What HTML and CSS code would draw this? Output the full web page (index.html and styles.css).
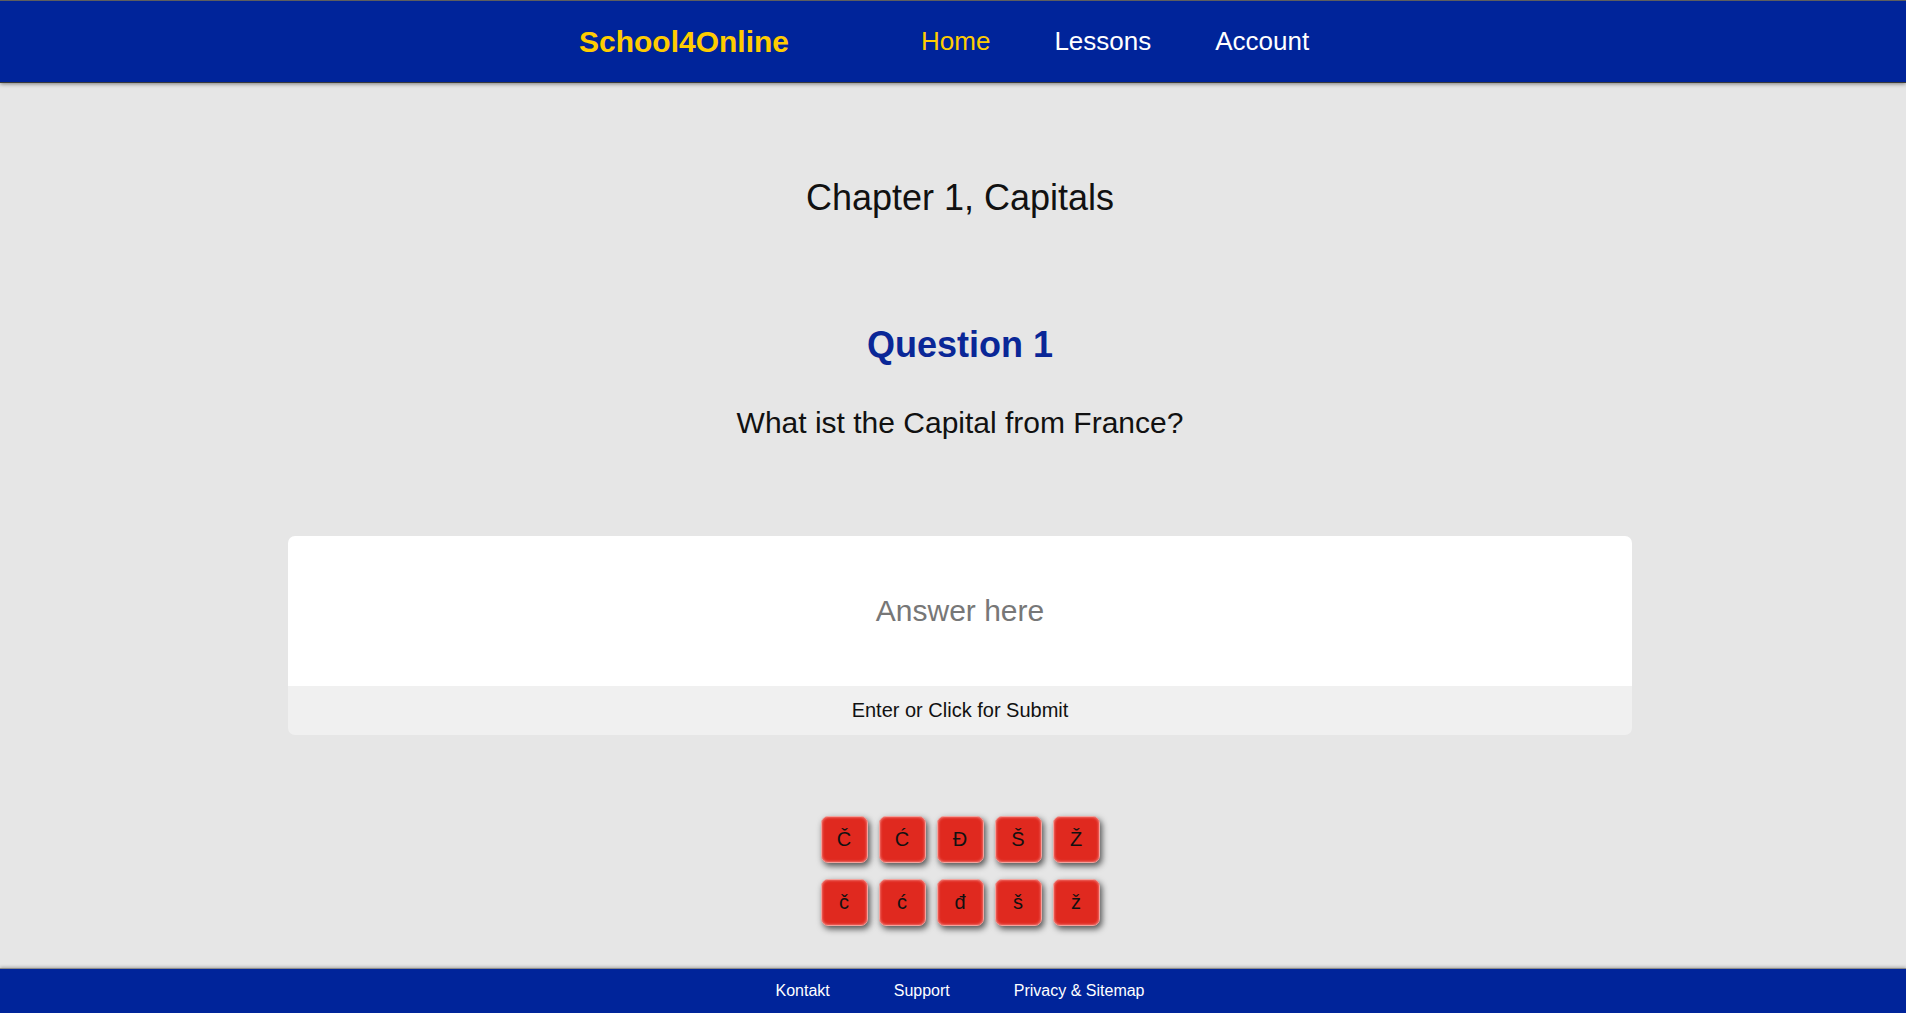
FILE: index.html
```html
<!DOCTYPE html>
<html lang="en">
<head>
<meta charset="utf-8">
<title>School4Online - Chapter 1, Capitals</title>
<link rel="stylesheet" href="styles.css">
</head>
<body>
<div class="page">
  <header class="topbar">
    <a class="logo" href="#">School4Online</a>
    <nav class="nav">
      <a class="nav-link active" href="#">Home</a>
      <a class="nav-link" href="#">Lessons</a>
      <a class="nav-link" href="#">Account</a>
    </nav>
  </header>

  <main class="main">
    <h1 class="chapter">Chapter 1, Capitals</h1>
    <h2 class="question">Question 1</h2>
    <p class="prompt">What ist the Capital from France?</p>

    <form class="answer">
      <input class="answer-input" type="text" placeholder="Answer here">
      <button class="answer-submit" type="submit">Enter or Click for Submit</button>
    </form>

    <div class="keys">
      <button class="key" type="button">Č</button>
      <button class="key" type="button">Ć</button>
      <button class="key" type="button">Đ</button>
      <button class="key" type="button">Š</button>
      <button class="key" type="button">Ž</button>
      <button class="key" type="button">č</button>
      <button class="key" type="button">ć</button>
      <button class="key" type="button">đ</button>
      <button class="key" type="button">š</button>
      <button class="key" type="button">ž</button>
    </div>
  </main>

  <footer class="footer">
    <a class="footer-link" href="#">Kontakt</a>
    <a class="footer-link" href="#">Support</a>
    <a class="footer-link" href="#">Privacy &amp; Sitemap</a>
  </footer>
</div>
</body>
</html>
```

FILE: styles.css
```css
html, body {
  margin: 0;
  padding: 0;
  background: #ffffff;
}

body {
  font-family: "Liberation Sans", Arial, sans-serif;
  color: #111111;
}

.page {
  width: calc(100% - 14px);
  min-height: 100vh;
  background: #e6e6e6;
  display: flex;
  flex-direction: column;
  overflow: hidden;
}

.topbar {
  height: 81px;
  border-top: 1px solid #5e5e5e;
  background: #00249a;
  box-shadow: 0 1px 0 #3a3a3a, 0 2px 4px rgba(0, 0, 0, 0.45);
  display: flex;
  align-items: center;
  padding-left: 579px;
  position: relative;
  z-index: 2;
}

.logo {
  font-size: 30px;
  font-weight: bold;
  color: #ffcc00;
  text-decoration: none;
  margin-right: 132px;
}

.nav {
  display: flex;
  gap: 64px;
}

.nav-link {
  font-size: 26px;
  color: #ffffff;
  text-decoration: none;
}

.nav-link.active {
  color: #ffcc00;
}

.main {
  flex: 1;
  margin-right: -14px;
  padding-top: 96px;
  display: flex;
  flex-direction: column;
  align-items: center;
}

.chapter {
  margin: 0;
  font-size: 36px;
  line-height: 40px;
  font-weight: normal;
  color: #111111;
}

.question {
  margin: 107px 0 0;
  font-size: 36px;
  line-height: 40px;
  font-weight: bold;
  color: #0a2797;
}

.prompt {
  margin: 41px 0 0;
  font-size: 30px;
  line-height: 34px;
  color: #111111;
}

.answer {
  margin: 96px 0 0;
  width: 1344px;
  border-radius: 7px;
  overflow: hidden;
  display: flex;
  flex-direction: column;
}

.answer-input {
  height: 150px;
  border: none;
  outline: none;
  padding: 0;
  margin: 0;
  background: #ffffff;
  font-family: "Liberation Sans", Arial, sans-serif;
  font-size: 30px;
  text-align: center;
  color: #111111;
}

.answer-input::placeholder {
  color: #777777;
}

.answer-submit {
  height: 49px;
  border: none;
  margin: 0;
  padding: 0;
  background: #f0f0f0;
  font-family: "Liberation Sans", Arial, sans-serif;
  font-size: 20px;
  color: #111111;
  cursor: pointer;
}

.keys {
  margin-top: 81px;
  display: grid;
  grid-template-columns: repeat(5, 47px);
  grid-auto-rows: 47px;
  column-gap: 11px;
  row-gap: 16px;
}

.key {
  box-sizing: border-box;
  width: 47px;
  height: 47px;
  padding: 0;
  border: 1px solid #f4a39d;
  border-radius: 7px;
  background: #e0291f;
  box-shadow: inset 0 0 3px rgba(255, 190, 190, 0.8), 2px 3px 6px rgba(0, 0, 0, 0.65);
  font-family: "Liberation Sans", Arial, sans-serif;
  font-size: 20px;
  color: #111111;
  cursor: pointer;
}

.footer {
  height: 44px;
  background: #00249a;
  box-shadow: 0 -1px 0 #8a8a8a, 0 -2px 3px rgba(0, 0, 0, 0.25);
  display: flex;
  align-items: center;
  justify-content: center;
  gap: 64px;
  padding-left: 14px;
  position: relative;
}

.footer-link {
  font-size: 16px;
  color: #ffffff;
  text-decoration: none;
}
```
